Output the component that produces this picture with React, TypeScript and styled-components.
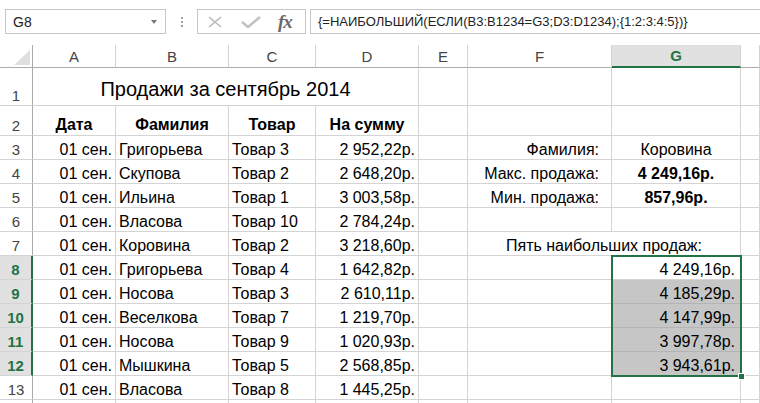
import React from 'react';
import styled, { createGlobalStyle } from 'styled-components';

const GlobalStyle = createGlobalStyle`
  html, body {
    margin: 0;
    padding: 0;
    background: #fff;
  }
  body {
    font-family: "Liberation Sans", Arial, sans-serif;
    overflow: hidden;
  }
`;

const GREEN = '#217346';
const GRID = '#d4d4d4';
const HEAD_LINE = '#ababab';

const Page = styled.div`
  width: 760px;
  height: 403px;
  overflow: hidden;
  background: #fff;
  color: #000;
`;

const FormulaBar = styled.div`
  display: flex;
  align-items: flex-start;
  height: 45px;
  padding: 9px 0 0 5px;
  box-sizing: border-box;
`;

const NameBox = styled.div`
  width: 161px;
  height: 25px;
  box-sizing: border-box;
  border: 1px solid #c6c6c6;
  display: flex;
  align-items: center;
  justify-content: space-between;
  padding: 0 8px 0 7px;
  font-size: 14px;
  color: #222;
`;

const DropArrow = styled.span`
  width: 0;
  height: 0;
  border-left: 3.5px solid transparent;
  border-right: 3.5px solid transparent;
  border-top: 4px solid #7a7a7a;
`;

const Grip = styled.div`
  width: 31px;
  height: 25px;
  display: flex;
  flex-direction: column;
  align-items: center;
  justify-content: center;
  gap: 2px;

  span {
    width: 2px;
    height: 2px;
    background: #a0a0a0;
  }
`;

const FxBox = styled.div`
  width: 109px;
  height: 25px;
  box-sizing: border-box;
  border: 1px solid #c6c6c6;
  display: flex;
  align-items: center;
  padding-left: 8px;
`;

const FxLabel = styled.span`
  font-family: "Liberation Serif", "Times New Roman", serif;
  font-style: italic;
  font-weight: bold;
  font-size: 19px;
  color: #6a6a6a;
  margin-left: 16px;
  letter-spacing: -1px;
`;

const FormulaInput = styled.div`
  flex: 1;
  margin-left: 4px;
  height: 25px;
  box-sizing: border-box;
  border: 1px solid #c6c6c6;
  border-right: none;
  display: flex;
  align-items: center;
  padding-left: 7px;
  font-size: 13px;
  color: #222;
  white-space: nowrap;
`;

const Sheet = styled.div`
  position: relative;
  display: grid;
  grid-template-columns: 33px 83px 113px 87px 103px 49px 144px 129px 1fr;
  grid-template-rows: 23px 38px 30px repeat(12, 24px);
`;

const Corner = styled.div`
  position: relative;
  box-sizing: border-box;
  border-right: 1px solid ${HEAD_LINE};
  border-bottom: 1px solid ${HEAD_LINE};

  &::after {
    content: '';
    position: absolute;
    left: 14px;
    top: 5px;
    width: 16px;
    height: 15px;
    background: #dfdfdf;
    clip-path: polygon(100% 0, 100% 100%, 0 100%);
  }
`;

const ColHeader = styled.div<{ $active?: boolean }>`
  box-sizing: border-box;
  display: flex;
  align-items: center;
  justify-content: center;
  font-size: 15px;
  color: ${({ $active }) => ($active ? GREEN : '#444')};
  font-weight: ${({ $active }) => ($active ? 'bold' : 'normal')};
  background: ${({ $active }) => ($active ? '#e1e1e1' : '#fff')};
  border-right: 1px solid ${GRID};
  border-bottom: ${({ $active }) => ($active ? `2px solid ${GREEN}` : `1px solid ${HEAD_LINE}`)};
`;

const RowHeader = styled.div<{ $active?: boolean }>`
  box-sizing: border-box;
  display: flex;
  align-items: flex-end;
  justify-content: center;
  font-size: 15px;
  line-height: 18px;
  color: ${({ $active }) => ($active ? GREEN : '#444')};
  font-weight: ${({ $active }) => ($active ? 'bold' : 'normal')};
  background: ${({ $active }) => ($active ? '#e1e1e1' : '#fff')};
  border-right: ${({ $active }) => ($active ? `2px solid ${GREEN}` : `1px solid ${HEAD_LINE}`)};
  border-bottom: 1px solid ${GRID};
`;

const Cell = styled.div<{
  $align: 'l' | 'c' | 'r';
  $bold?: boolean;
  $fill?: boolean;
  $span?: number;
  $size?: number;
  $pr?: number;
  $pb?: number;
}>`
  grid-column: span ${({ $span }) => $span ?? 1};
  box-sizing: border-box;
  display: flex;
  align-items: flex-end;
  justify-content: ${({ $align }) => ($align === 'l' ? 'flex-start' : $align === 'c' ? 'center' : 'flex-end')};
  padding: 0 ${({ $pr }) => $pr ?? 3}px ${({ $pb }) => $pb ?? 0}px 3px;
  font-size: ${({ $size }) => $size ?? 16}px;
  line-height: ${({ $size }) => ($size ? $size + 6 : 19)}px;
  font-weight: ${({ $bold }) => ($bold ? 'bold' : 'normal')};
  background: ${({ $fill }) => ($fill ? '#c6c6c6' : '#fff')};
  border-right: 1px solid ${({ $fill }) => ($fill ? '#b4b4b4' : GRID)};
  border-bottom: 1px solid ${({ $fill }) => ($fill ? '#b4b4b4' : GRID)};
  white-space: nowrap;
  overflow: hidden;
`;

const Selection = styled.div`
  position: absolute;
  left: 611px;
  top: 210px;
  width: 131px;
  height: 122px;
  box-sizing: border-box;
  border: 2px solid ${GREEN};
  pointer-events: none;

  &::after {
    content: '';
    position: absolute;
    right: -5px;
    bottom: -5px;
    width: 5px;
    height: 5px;
    background: ${GREEN};
    border: 1px solid #fff;
  }
`;

type CellDef = {
  t?: string;
  a?: 'l' | 'c' | 'r';
  b?: boolean;
  span?: number;
  fill?: boolean;
  size?: number;
  pr?: number;
  pb?: number;
};

// H is wider than the window, its letter sits off screen
const columns = ['A', 'B', 'C', 'D', 'E', 'F', 'G', ''];

const sales: [string, string, string][] = [
  ['Григорьева', 'Товар 3', '2 952,22р.'],
  ['Скупова', 'Товар 2', '2 648,20р.'],
  ['Ильина', 'Товар 1', '3 003,58р.'],
  ['Власова', 'Товар 10', '2 784,24р.'],
  ['Коровина', 'Товар 2', '3 218,60р.'],
  ['Григорьева', 'Товар 4', '1 642,82р.'],
  ['Носова', 'Товар 3', '2 610,11р.'],
  ['Веселкова', 'Товар 7', '1 219,70р.'],
  ['Носова', 'Товар 9', '1 020,93р.'],
  ['Мышкина', 'Товар 5', '2 568,85р.'],
  ['Власова', 'Товар 8', '1 445,25р.'],
];

const summary: Record<number, CellDef[]> = {
  3: [{ t: 'Фамилия:', a: 'r', pr: 12 }, { t: 'Коровина', a: 'c' }],
  4: [{ t: 'Макс. продажа:', a: 'r', pr: 12 }, { t: '4 249,16р.', a: 'c', b: true }],
  5: [{ t: 'Мин. продажа:', a: 'r', pr: 12 }, { t: '857,96р.', a: 'c', b: true }],
  7: [{ t: 'Пять наибольших продаж:', a: 'c', span: 2 }],
  8: [{}, { t: '4 249,16р.', a: 'r', pr: 5 }],
  9: [{}, { t: '4 185,29р.', a: 'r', pr: 5, fill: true }],
  10: [{}, { t: '4 147,99р.', a: 'r', pr: 5, fill: true }],
  11: [{}, { t: '3 997,78р.', a: 'r', pr: 5, fill: true }],
  12: [{}, { t: '3 943,61р.', a: 'r', pr: 5, fill: true }],
};

const buildRows = (): CellDef[][] => {
  const rows: CellDef[][] = [];
  rows.push([{ t: 'Продажи за сентябрь 2014', a: 'c', span: 4, size: 20, pb: 3 }, {}, {}, {}, {}]);
  rows.push([
    { t: 'Дата', a: 'c', b: true, pb: 1 },
    { t: 'Фамилия', a: 'c', b: true, pb: 1 },
    { t: 'Товар', a: 'c', b: true, pb: 1 },
    { t: 'На сумму', a: 'c', b: true, pb: 1 },
    {}, {}, {}, {},
  ]);
  sales.forEach(([name, item, sum], i) => {
    const r = i + 3;
    const right = summary[r] ?? [{}, {}];
    rows.push([
      { t: '01 сен.', a: 'r' },
      { t: name, a: 'l' },
      { t: item, a: 'l' },
      { t: sum, a: 'r' },
      {},
      ...right,
      {},
    ]);
  });
  rows.push([{}, {}, {}, {}, {}, {}, {}, {}]);
  return rows;
};

const XIcon = () => (
  <svg width="18" height="12" viewBox="0 0 18 12">
    <path d="M3 1 L15 11 M15 1 L3 11" stroke="#b8b8b8" strokeWidth="1.6" fill="none" />
  </svg>
);

const CheckIcon = () => (
  <svg width="22" height="12" viewBox="0 0 22 12" style={{ marginLeft: 16 }}>
    <path d="M2 6 L8 11 L20 1" stroke="#c2c2c2" strokeWidth="2.6" fill="none" />
  </svg>
);

export default function App() {
  const rows = buildRows();
  const lastRow = rows.length;
  return (
    <Page>
      <GlobalStyle />
      <FormulaBar>
        <NameBox>
          G8
          <DropArrow />
        </NameBox>
        <Grip>
          <span />
          <span />
          <span />
        </Grip>
        <FxBox>
          <XIcon />
          <CheckIcon />
          <FxLabel>fx</FxLabel>
        </FxBox>
        <FormulaInput>{'{=НАИБОЛЬШИЙ(ЕСЛИ(B3:B1234=G3;D3:D1234);{1:2:3:4:5})}'}</FormulaInput>
      </FormulaBar>

      <Sheet>
        <Corner />
        {columns.map((c, i) => (
          <ColHeader key={i} $active={c === 'G'}>
            {c}
          </ColHeader>
        ))}
        {rows.map((cells, i) => {
          const r = i + 1;
          return (
            <React.Fragment key={r}>
              <RowHeader $active={r >= 8 && r <= 12}>{r === lastRow ? '' : r}</RowHeader>
              {cells.map((c, j) => (
                <Cell
                  key={j}
                  $align={c.a ?? 'l'}
                  $bold={c.b}
                  $fill={c.fill}
                  $span={c.span}
                  $size={c.size}
                  $pr={c.pr}
                  $pb={c.pb}
                >
                  {c.t}
                </Cell>
              ))}
            </React.Fragment>
          );
        })}
        <Selection />
      </Sheet>
    </Page>
  );
}
